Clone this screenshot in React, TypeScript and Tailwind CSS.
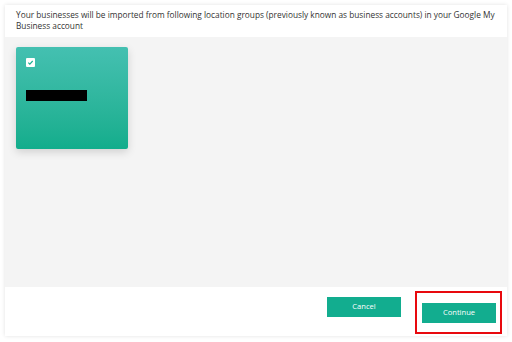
export default function App() {
  return (
    <div className="w-[512px] h-[342px] bg-white p-[5px] pb-[6px] font-['Open_Sans',sans-serif]">
      <div className="flex h-full flex-col shadow-[0_0_4px_rgba(0,0,0,0.12)]">
        {/* header */}
        <div className="h-[32px] bg-white px-[11px] pt-[4px] text-[8.3px] leading-[11px] text-[#333]">
          Your businesses will be imported from following location groups
          (previously known as business accounts) in your Google My Business
          account
        </div>

        {/* groups */}
        <div className="flex-1 bg-[#f4f4f4] px-[11px] pt-[10px]">
          <div className="relative h-[102px] w-[112px] rounded-[2px] bg-gradient-to-b from-[#44c0b1] to-[#11ad8c] shadow-[0_3px_8px_rgba(0,0,0,0.15)]">
            <div className="absolute left-[10px] top-[11px] flex h-[9px] w-[9px] items-center justify-center rounded-[1px] bg-white">
              <svg width="7" height="7" viewBox="0 0 8 8">
                <path d="M1.5 4.2 L3.2 5.8 L6.5 2.3" stroke="#17b092" strokeWidth="1.3" fill="none" />
              </svg>
            </div>
            <div className="absolute left-[10px] top-[43px] h-[11px] w-[61px] bg-black" />
          </div>
        </div>

        {/* footer */}
        <div className="flex h-[49px] items-start justify-end gap-[21px] bg-white pr-[11px] pt-[10px]">
          <button className="h-[20px] w-[74px] bg-[#12ad8f] text-[7.6px] text-white">
            Cancel
          </button>
          <div className="relative">
            <button className="h-[20px] w-[74px] bg-[#12ad8f] text-[7.6px] text-white">
              Continue
            </button>
            <div className="absolute -left-[7px] -right-[6px] -top-[6px] -bottom-[11px] border-2 border-solid border-[#e8090e]" />
          </div>
        </div>
      </div>
    </div>
  );
}
